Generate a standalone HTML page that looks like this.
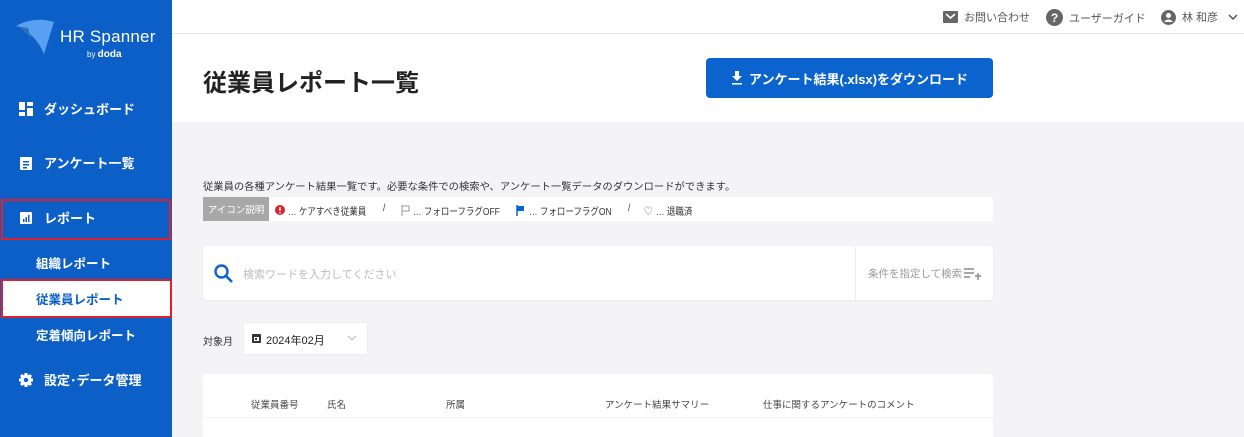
<!DOCTYPE html>
<html><head><meta charset="utf-8"><style>
*{box-sizing:border-box;margin:0;padding:0}
html,body{width:1244px;height:437px;overflow:hidden}
body{background:#f4f4f6;font-family:"Liberation Sans","Noto Sans CJK JP",sans-serif;position:relative;color:#333}
.side{position:absolute;left:0;top:0;width:172px;height:437px;background:#0b5fc7;color:#fff}
.abs{position:absolute}
.nav{position:absolute;left:18px;font-size:13px;font-weight:bold;display:flex;align-items:center;gap:10px}
.ico{width:16px;height:16px;display:inline-block}
.sub{position:absolute;left:36px;font-size:12.5px;font-weight:bold}
.hdr{position:absolute;left:172px;top:0;width:1072px;height:122px;background:#fff}
.topbar{position:absolute;left:172px;top:0;width:1072px;height:34px;border-bottom:1px solid #e8e8e8;background:#fff}
.tb{position:absolute;top:9px;font-size:11px;color:#555;display:flex;align-items:center;gap:6px}
.sm{font-size:10px;color:#333}
.lg{position:absolute;top:203px;font-size:10px;color:#333;white-space:nowrap;transform:scaleX(0.85);transform-origin:left}
</style></head><body>
<div class="side">
  <svg class="abs" style="left:14px;top:18px" width="44" height="40" viewBox="0 0 44 40"><path d="M2 8 Q20 -2 40 4 L30 36 Q22 16 2 8Z" fill="#5aa0f2"/><path d="M2 8 Q14 14 18 24 L14 10Z" fill="#2d6fc0"/></svg>
  <div class="abs" style="left:60px;top:27px;font-size:17px;letter-spacing:0.2px">HR Spanner</div>
  <div class="abs" style="left:87px;top:49px;font-size:8px">by <b style="font-size:10px">doda</b></div>
  <div class="nav" style="top:99px"><svg class="ico" viewBox="0 0 16 16"><rect x="1" y="1" width="6" height="8" fill="#fff"/><rect x="9" y="1" width="6" height="4" fill="#fff"/><rect x="1" y="11" width="6" height="4" fill="#fff"/><rect x="9" y="7" width="6" height="8" fill="#fff"/></svg>ダッシュボード</div>
  <div class="nav" style="top:153px"><svg class="ico" viewBox="0 0 16 16"><rect x="2" y="2" width="12" height="13" rx="1" fill="#fff"/><rect x="5" y="6" width="6" height="1.5" fill="#0b5fc7"/><rect x="5" y="9" width="6" height="1.5" fill="#0b5fc7"/><rect x="5" y="12" width="4" height="1.5" fill="#0b5fc7"/></svg>アンケート一覧</div>
  <div class="abs" style="left:1px;top:199px;width:170px;height:41px;border:2px solid #e0202a"></div>
  <div class="nav" style="top:208px"><svg class="ico" viewBox="0 0 16 16"><rect x="2" y="2" width="12" height="12" rx="1" fill="#fff"/><rect x="5" y="9" width="1.5" height="3" fill="#0b5fc7"/><rect x="7.5" y="7" width="1.5" height="5" fill="#0b5fc7"/><rect x="10" y="5" width="1.5" height="7" fill="#0b5fc7"/></svg>レポート</div>
  <div class="sub" style="top:253px">組織レポート</div>
  <div class="abs" style="left:1px;top:279px;width:171px;height:39px;background:#fff;border:2px solid #e0202a"></div>
  <div class="sub" style="top:289px;color:#0b5fc7">従業員レポート</div>
  <div class="sub" style="top:325px">定着傾向レポート</div>
  <div class="nav" style="top:370px"><svg class="ico" viewBox="0 0 16 16"><circle cx="8" cy="8" r="5.5" fill="#fff"/><g stroke="#fff" stroke-width="3"><line x1="8" y1="1" x2="8" y2="15"/><line x1="1" y1="8" x2="15" y2="8"/><line x1="3" y1="3" x2="13" y2="13"/><line x1="13" y1="3" x2="3" y2="13"/></g><circle cx="8" cy="8" r="2.2" fill="#0b5fc7"/></svg>設定･データ管理</div>
</div>
<div class="hdr"></div>
<div class="topbar"></div>
<div class="tb" style="left:943px"><svg width="15" height="12" viewBox="0 0 15 12"><rect width="15" height="12" rx="1" fill="#666"/><path d="M3 3 L7.5 7 L12 3" stroke="#fff" stroke-width="1.6" fill="none"/></svg>お問い合わせ</div>
<div class="tb" style="left:1046px"><svg width="17" height="17" viewBox="0 0 17 17"><circle cx="8.5" cy="8.5" r="8.5" fill="#666"/><text x="8.5" y="13" font-size="12" font-weight="bold" fill="#fff" text-anchor="middle" font-family="Liberation Sans">?</text></svg>ユーザーガイド</div>
<div class="tb" style="left:1161px"><svg width="15" height="15" viewBox="0 0 15 15"><circle cx="7.5" cy="7.5" r="7.5" fill="#666"/><circle cx="7.5" cy="5.5" r="2.5" fill="#fff"/><path d="M3 12 Q7.5 7 12 12" fill="#fff"/></svg>林 和彦 <svg width="10" height="8" viewBox="0 0 10 8" style="margin-left:4px"><path d="M1 2 L5 6 L9 2" stroke="#555" stroke-width="1.5" fill="none"/></svg></div>
<div class="abs" style="left:203px;top:63px;font-size:24px;font-weight:bold;color:#222">従業員レポート一覧</div>
<div class="abs" style="left:706px;top:58px;width:287px;height:40px;background:#0b63ce;border-radius:4px;color:#fff;font-size:13px;font-weight:bold;display:flex;align-items:center;justify-content:center;gap:6px"><svg width="12" height="14" viewBox="0 0 12 14"><path d="M4 0h4v5h3L6 10 1 5h3z" fill="#fff"/><rect x="1" y="12" width="10" height="1.6" fill="#fff"/></svg>アンケート結果(.xlsx)をダウンロード</div>
<div class="abs sm" style="left:203px;top:178px;font-size:10.3px">従業員の各種アンケート結果一覧です。必要な条件での検索や、アンケート一覧データのダウンロードができます。</div>
<div class="abs" style="left:203px;top:197px;width:790px;height:24px;background:#fff"></div>
<div class="abs" style="left:203px;top:197px;width:66px;height:24px;background:#a8a8a8;color:#fff;font-size:9.5px;display:flex;align-items:center;justify-content:center">アイコン説明</div>
<svg class="abs" style="left:275px;top:205px" width="10" height="10"><circle cx="5" cy="5" r="5" fill="#e0202a"/><rect x="4.2" y="2" width="1.6" height="4" fill="#fff"/><rect x="4.2" y="7" width="1.6" height="1.4" fill="#fff"/></svg>
<div class="lg" style="left:288px">… ケアすべき従業員</div>
<div class="lg" style="left:383px">/</div>
<svg class="abs" style="left:401px;top:205px" width="10" height="11"><path d="M1 0v11M1 1h7v5H1" stroke="#999" fill="none"/></svg>
<div class="lg" style="left:413px">… フォローフラグOFF</div>
<svg class="abs" style="left:516px;top:205px" width="10" height="11"><path d="M1 0v11" stroke="#0b63ce" stroke-width="1.5"/><rect x="1" y="1" width="7" height="5" fill="#0b63ce"/></svg>
<div class="lg" style="left:529px">… フォローフラグON</div>
<div class="lg" style="left:628px">/</div>
<div class="lg" style="left:644px;color:#777">♡</div>
<div class="lg" style="left:656px">… 退職済</div>
<div class="abs" style="left:203px;top:246px;width:790px;height:54px;background:#fff;border-radius:4px;box-shadow:0 1px 2px rgba(0,0,0,.06)"></div>
<svg class="abs" style="left:213px;top:263px" width="22" height="22" viewBox="0 0 22 22"><circle cx="8.5" cy="8.5" r="6" stroke="#0b63ce" stroke-width="2.4" fill="none"/><path d="M13 13 L19 19" stroke="#0b63ce" stroke-width="2.6"/></svg>
<div class="abs" style="left:243px;top:266px;font-size:11px;color:#bbb">検索ワードを入力してください</div>
<div class="abs" style="left:855px;top:246px;width:1px;height:54px;background:#eee"></div>
<div class="abs" style="left:868px;top:266px;font-size:10.5px;color:#999">条件を指定して検索</div>
<svg class="abs" style="left:964px;top:267px" width="17" height="14"><path d="M0 2h10M0 6h10M0 10h6M11 9h6M14 6v7" stroke="#888" stroke-width="1.4"/></svg>
<div class="abs sm" style="left:203px;top:333px">対象月</div>
<div class="abs" style="left:243px;top:322px;width:125px;height:33px;background:#fff;border-radius:3px;border:1px solid #eee"></div>
<svg class="abs" style="left:252px;top:333px" width="9" height="10"><rect y="1" width="9" height="9" rx="1" fill="#333"/><rect x="2" y="4" width="5" height="4" fill="#fff"/><rect x="3" y="5" width="2" height="2" fill="#333"/></svg>
<div class="abs" style="left:266px;top:332px;font-size:11px;color:#222">2024年02月</div>
<svg class="abs" style="left:347px;top:335px" width="10" height="7"><path d="M1 1 L5 5 L9 1" stroke="#bbb" fill="none"/></svg>
<div class="abs" style="left:203px;top:374px;width:790px;height:70px;background:#fff;border-radius:4px"></div>
<div class="abs" style="left:203px;top:417px;width:790px;height:1px;background:#f0f0f0"></div>
<div class="abs" style="top:397px;left:251px;font-size:9.5px;color:#444">従業員番号</div>
<div class="abs" style="top:397px;left:327px;font-size:9.5px;color:#444">氏名</div>
<div class="abs" style="top:397px;left:446px;font-size:9.5px;color:#444">所属</div>
<div class="abs" style="top:397px;left:605px;font-size:9.5px;color:#444">アンケート結果サマリー</div>
<div class="abs" style="top:397px;left:763px;font-size:9.5px;color:#444">仕事に関するアンケートのコメント</div>
</body></html>
